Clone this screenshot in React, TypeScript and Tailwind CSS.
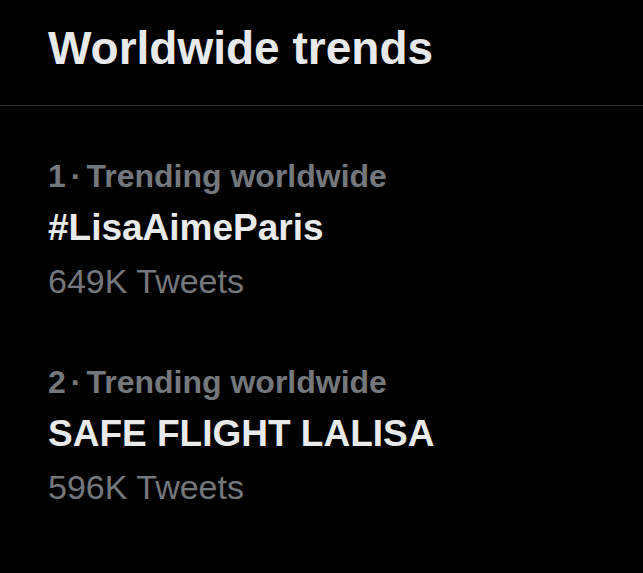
const trends = [
  { rank: 1, label: "Trending worldwide", name: "#LisaAimeParis", count: "649K Tweets" },
  { rank: 2, label: "Trending worldwide", name: "SAFE FLIGHT LALISA", count: "596K Tweets" },
];

export default function App() {
  return (
    <div className="min-h-[573px] w-full bg-black font-['Liberation_Sans',Arial,sans-serif]">
      <div className="border-b border-[#2f3336] px-[48px] pb-[31px] pt-[22px]">
        <h1 className="text-[46px] font-bold leading-[52px] text-[#e7e9ea]">Worldwide trends</h1>
      </div>

      <div className="flex flex-col gap-[61px] px-[48px] pt-[50px]">
        {trends.map((t) => (
          <div key={t.rank} className="flex flex-col">
            <div className="text-[32px] font-bold leading-[40px] text-[#74777b]">
              {t.rank}
              <span className="mx-[5px]">·</span>
              {t.label}
            </div>
            <div className="mt-[10px] text-[37px] font-bold leading-[44px] text-[#e9eaeb]">{t.name}</div>
            <div className="mt-[11px] text-[34px] leading-[40px] text-[#74777b]">{t.count}</div>
          </div>
        ))}
      </div>
    </div>
  );
}
